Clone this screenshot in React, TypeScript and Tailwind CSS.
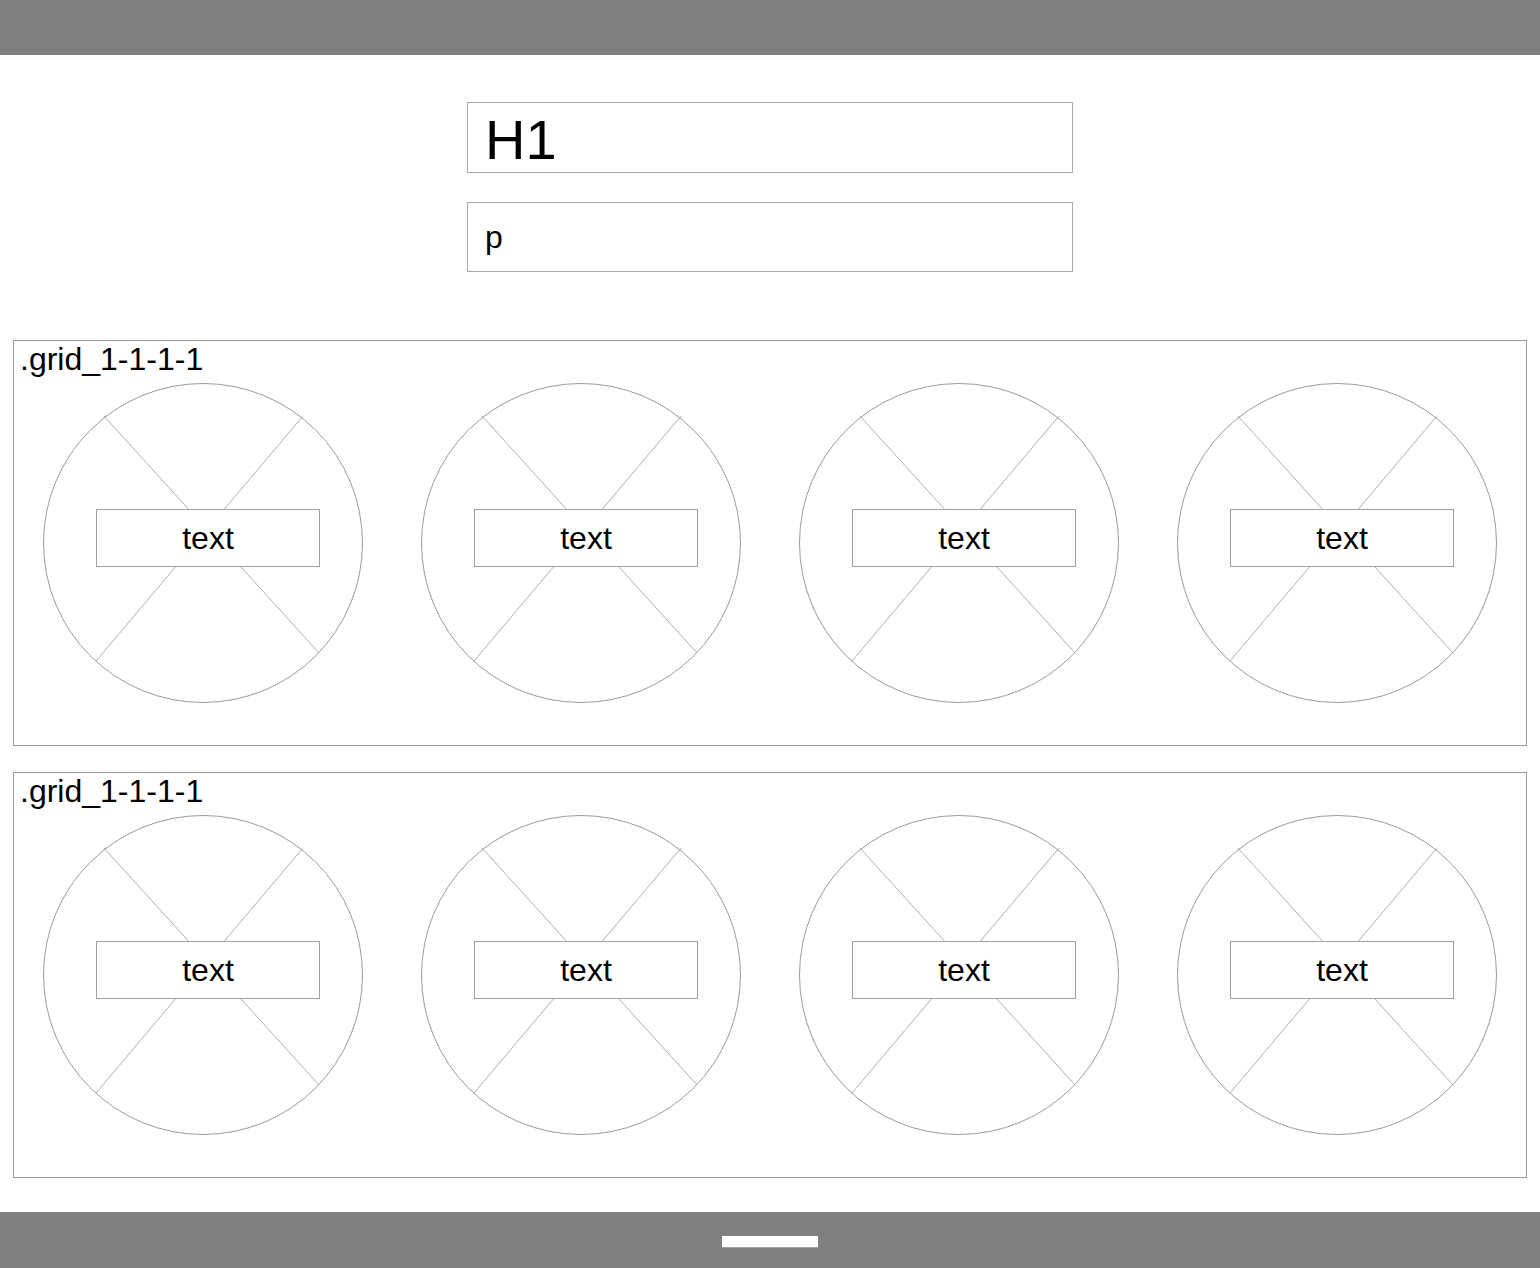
import React from 'react';

const FONT = { fontFamily: '"Liberation Sans", Arial, Helvetica, sans-serif' };

function Placeholder() {
  return (
    <div className="relative w-[320px] h-[320px]">
      <svg width="320" height="320" viewBox="0 0 320 320" className="absolute inset-0">
        <circle cx="160" cy="160" r="159.5" fill="none" stroke="#9a9a9a" strokeWidth="1" />
        <line x1="61" y1="33" x2="276" y2="270" stroke="#9a9a9a" strokeWidth="0.8" />
        <line x1="260" y1="33" x2="53" y2="278" stroke="#9a9a9a" strokeWidth="0.8" />
      </svg>
      <div className="absolute left-[53px] top-[126px] w-[224px] h-[58px] bg-white border border-[#a0a0a0] flex items-center justify-center text-[32px] text-black">
        text
      </div>
    </div>
  );
}

function GridBlock() {
  return (
    <section className="mx-[13px] w-[1514px] h-[406px] border border-[#999999]">
      <div className="pl-[6px] h-[37px] leading-[37px] text-[32px] text-black">.grid_1-1-1-1</div>
      <div className="grid grid-cols-4 pt-[5px]">
        {[0, 1, 2, 3].map((i) => (
          <div key={i} className="flex justify-center">
            <Placeholder />
          </div>
        ))}
      </div>
    </section>
  );
}

export default function App() {
  return (
    <div className="w-[1540px] h-[1268px] bg-white flex flex-col" style={FONT}>
      {/* Header */}
      <header className="h-[55px] bg-[#808080] shrink-0" />

      {/* Title + intro */}
      <div className="mt-[47px] w-[606px] mx-auto h-[71px] border border-[#aaaaaa] px-[17px] pt-[6px] leading-[62px] text-[56px] text-black">
        H1
      </div>
      <div className="mt-[29px] w-[606px] mx-auto h-[70px] border border-[#aaaaaa] px-[17px] flex items-center text-[32px] text-black">
        p
      </div>

      {/* Grids */}
      <div className="mt-[68px]">
        <GridBlock />
      </div>
      <div className="mt-[26px]">
        <GridBlock />
      </div>

      {/* Footer */}
      <footer className="mt-[34px] h-[56px] bg-[#808080] flex justify-center pt-[24px] shrink-0">
        <div className="w-[96px] h-[12px] bg-white border-b border-[#a0a0a0]" />
      </footer>
    </div>
  );
}
